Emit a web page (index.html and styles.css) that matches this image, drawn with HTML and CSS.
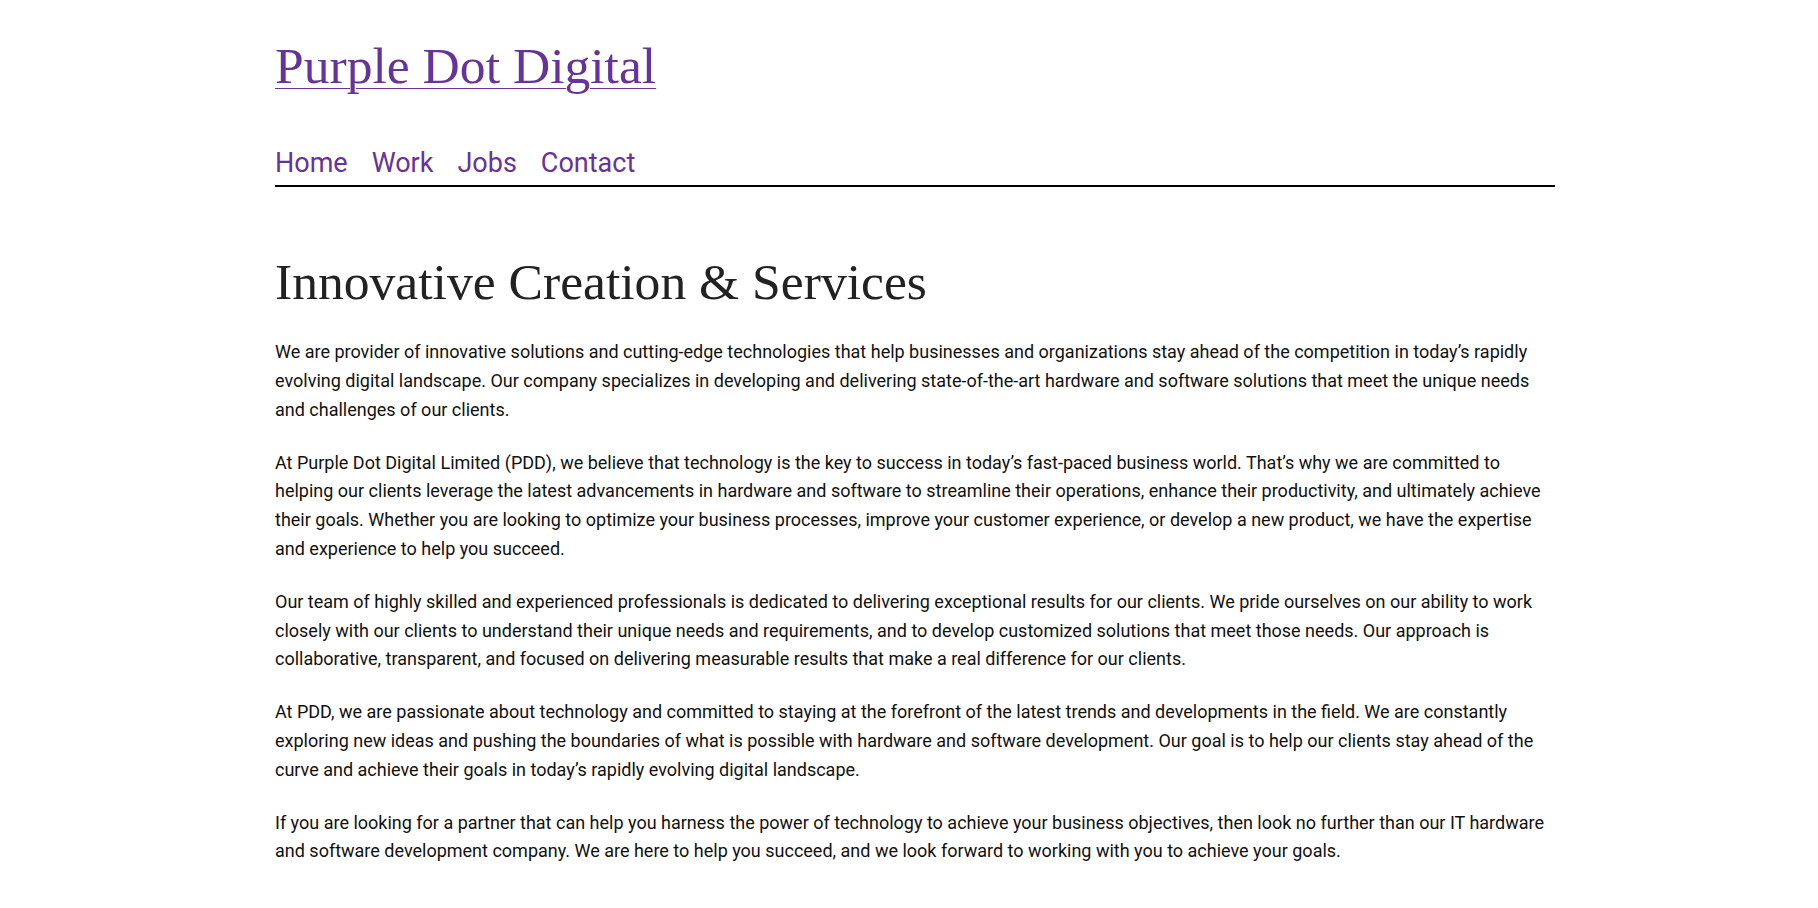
FILE: index.html
```html
<!DOCTYPE html>
<html lang="en">
<head>
<meta charset="utf-8">
<title>Purple Dot Digital</title>
<link rel="stylesheet" href="styles.css">
</head>
<body>
<div class="page">
  <header class="site-header">
    <a class="site-title" href="#">Purple Dot Digital</a>
    <nav class="site-nav">
      <a href="#">Home</a>
      <a href="#">Work</a>
      <a href="#">Jobs</a>
      <a href="#">Contact</a>
    </nav>
  </header>
  <main class="content">
    <h1 class="page-title">Innovative Creation &amp; Services</h1>
    <p>We are provider of innovative solutions and cutting-edge technologies that help businesses and organizations stay ahead of the competition in today’s rapidly evolving digital landscape. Our company specializes in developing and delivering state-of-the-art hardware and software solutions that meet the unique needs and challenges of our clients.</p>
    <p>At Purple Dot Digital Limited (PDD), we believe that technology is the key to success in today’s fast-paced business world. That’s why we are committed to helping our clients leverage the latest advancements in hardware and software to streamline their operations, enhance their productivity, and ultimately achieve their goals. Whether you are looking to optimize your business processes, improve your customer experience, or develop a new product, we have the expertise and experience to help you succeed.</p>
    <p>Our team of highly skilled and experienced professionals is dedicated to delivering exceptional results for our clients. We pride ourselves on our ability to work closely with our clients to understand their unique needs and requirements, and to develop customized solutions that meet those needs. Our approach is collaborative, transparent, and focused on delivering measurable results that make a real difference for our clients.</p>
    <p>At PDD, we are passionate about technology and committed to staying at the forefront of the latest trends and developments in the field. We are constantly exploring new ideas and pushing the boundaries of what is possible with hardware and software development. Our goal is to help our clients stay ahead of the curve and achieve their goals in today’s rapidly evolving digital landscape.</p>
    <p>If you are looking for a partner that can help you harness the power of technology to achieve your business objectives, then look no further than our IT hardware and software development company. We are here to help you succeed, and we look forward to working with you to achieve your goals.</p>
  </main>
</div>
</body>
</html>
```
FILE: styles.css
```css
html, body {
  margin: 0;
  padding: 0;
  background: #fff;
}
.page {
  width: 1280px;
  margin-left: 275px;
  padding-top: 35px;
}
.site-header {
  display: flex;
  flex-direction: column;
  align-items: flex-start;
}
.site-title {
  font-family: "Liberation Serif", serif;
  font-size: 51.6px;
  line-height: 62px;
  color: #663399;
  text-decoration: underline;
  text-decoration-thickness: 1px;
  text-underline-offset: 5px;
}
.site-nav {
  align-self: stretch;
  display: flex;
  gap: 24px;
  margin-top: 50px;
  padding-bottom: 4px;
  border-bottom: 2px solid #000;
  font-family: Roboto, sans-serif;
  font-size: 27px;
  line-height: 33.6px;
}
.site-nav a {
  color: #663399;
  text-decoration: none;
}
.content {
  padding-top: 64.6px;
}
.page-title {
  margin: 0 0 25px;
  font-family: "Liberation Serif", serif;
  font-weight: normal;
  font-size: 51.6px;
  line-height: 62px;
  color: #222;
}
.content p {
  margin: 0 0 24px;
  font-family: Roboto, sans-serif;
  font-size: 18px;
  line-height: 28.8px;
  color: #111;
}
```
